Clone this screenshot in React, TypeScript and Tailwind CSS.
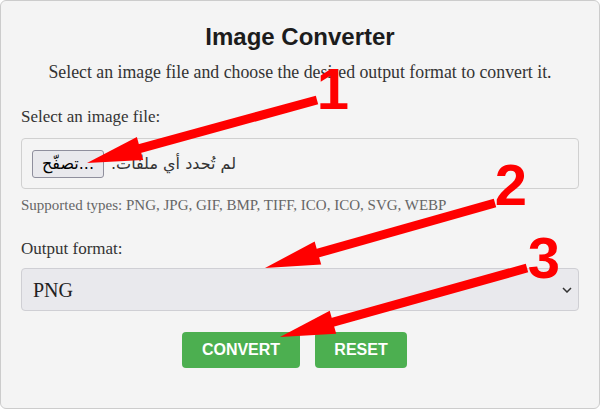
import { useState } from "react";

const serif = "font-['Liberation_Serif',serif]";

// annotation arrows (tip → tail), drawn over the card
const arrows = [
  { tip: [87, 163], tail: [317, 100] },
  { tip: [265, 268], tail: [495, 203] },
  { tip: [280, 337], tail: [527, 268] },
];

function arrowHead(tip: number[], tail: number[]) {
  const dx = tail[0] - tip[0];
  const dy = tail[1] - tip[1];
  const len = Math.hypot(dx, dy);
  const ux = dx / len;
  const uy = dy / len;
  const bx = tip[0] + ux * 55;
  const by = tip[1] + uy * 55;
  const px = -uy * 12;
  const py = ux * 12;
  return `${tip[0]},${tip[1]} ${bx + px},${by + py} ${bx - px},${by - py}`;
}

function Annotations() {
  return (
    <svg
      className="pointer-events-none absolute inset-0"
      width="600"
      height="409"
      viewBox="0 0 600 409"
    >
      {arrows.map((a, i) => {
        const dx = a.tail[0] - a.tip[0];
        const dy = a.tail[1] - a.tip[1];
        const len = Math.hypot(dx, dy);
        const sx = a.tip[0] + (dx / len) * 45;
        const sy = a.tip[1] + (dy / len) * 45;
        return (
          <g key={i} fill="#ff0000" stroke="#ff0000">
            <line x1={sx} y1={sy} x2={a.tail[0]} y2={a.tail[1]} strokeWidth="9" />
            <polygon points={arrowHead(a.tip, a.tail)} stroke="none" />
          </g>
        );
      })}
      <g fill="#ff0000" fontFamily="Liberation Sans, Arial, sans-serif" fontWeight="bold" fontSize="58" textAnchor="middle">
        <text x="333" y="109">1</text>
        <text x="511" y="205">2</text>
        <text x="544" y="278">3</text>
      </g>
    </svg>
  );
}

export default function App() {
  const [format] = useState("PNG");

  return (
    <div className="relative h-[409px] w-[600px] overflow-hidden bg-white">
      {/* Card */}
      <div className="h-[409px] w-[600px] rounded-md border border-[#cccccc] bg-[#f4f4f4] px-5">
        <h2 className="mt-[22px] text-center font-['Liberation_Sans',Arial,sans-serif] text-[24px] leading-[28px] font-bold text-[#1c1c1c]">
          Image Converter
        </h2>
        <p className={`mt-[10px] text-center text-[17.8px] leading-[22px] text-[#333] ${serif}`}>
          Select an image file and choose the desired output format to convert it.
        </p>

        {/* file input */}
        <label className={`mt-[24px] block text-[17px] leading-[20px] text-[#333] ${serif}`}>
          Select an image file:
        </label>
        <div className="mt-[11px] flex h-[51px] items-center rounded border border-[#d0d0d0] bg-[#f4f4f4] pl-[10px]">
          <button className="h-[28px] w-[72px] rounded-[3px] border border-[#8f8f9d] bg-[#e9e9ed] font-['DejaVu_Sans',sans-serif] text-[16px] leading-none text-black">
            تصفّح...
          </button>
          <span dir="rtl" className="ml-[7px] font-['DejaVu_Sans',sans-serif] text-[16px] text-[#333]">
            لم تُحدد أي ملفّات.
          </span>
        </div>
        <p className={`mt-[7px] text-[15px] leading-[18px] text-[#666] ${serif}`}>
          Supported types: PNG, JPG, GIF, BMP, TIFF, ICO, ICO, SVG, WEBP
        </p>

        {/* output format */}
        <label className={`mt-[25px] block text-[17px] leading-[20px] text-[#333] ${serif}`}>
          Output format:
        </label>
        <div className="mt-[9px] flex h-[43px] items-center justify-between rounded border border-[#cfcfd4] bg-[#e9e9ed] pl-[11px] pr-[6px]">
          <span className={`text-[20px] text-[#222] ${serif}`}>{format}</span>
          <svg width="10" height="6" viewBox="0 0 10 6" fill="none">
            <path d="M1 1l4 4 4-4" stroke="#333" strokeWidth="1.5" />
          </svg>
        </div>

        {/* actions */}
        <div className="mt-[21px] flex justify-center gap-[15px] pr-[11px] font-['Liberation_Sans',Arial,sans-serif]">
          <button className="h-[36px] w-[118px] rounded bg-[#4caf50] text-[16px] font-bold text-white">
            CONVERT
          </button>
          <button className="h-[36px] w-[92px] rounded bg-[#4caf50] text-[16px] font-bold text-white">
            RESET
          </button>
        </div>
      </div>
      <Annotations />
    </div>
  );
}
